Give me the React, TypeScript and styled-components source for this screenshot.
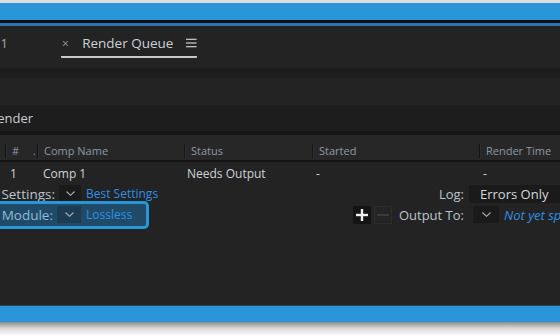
import React from "react";
import styled, {createGlobalStyle} from "styled-components";

const GlobalStyle = createGlobalStyle`
    * {
        box-sizing: border-box;
    }

    body {
        margin: 0;
        background: #232323;
        font-family: "Open Sans", "Noto Sans", sans-serif;
    }
`;

const Screen = styled.div`
    width: 560px;
    height: 336px;
    display: flex;
    flex-direction: column;
    overflow: hidden;
    background: #232323;
`;

const Strip = styled.div<{ h: number; bg: string }>`
    flex-shrink: 0;
    height: ${({h}) => h}px;
    background: ${({bg}) => bg};
`;

const FadeOut = styled.div`
    flex-shrink: 0;
    height: 14px;
    background: linear-gradient(#8c8c8c, #d8d8d8 45%, #fff);
`;

const Panel = styled.div`
    flex: 1;
    display: flex;
    flex-direction: column;
    background: #232323;
    border-bottom: 1px solid #2f4658;
`;

const TabRow = styled.div`
    height: 42px;
    flex-shrink: 0;
    display: flex;
    align-items: flex-start;
`;

// keeps the tail end of text that runs off the left edge
const ClipLeft = styled.div<{ w: number }>`
    width: ${({w}) => w}px;
    flex-shrink: 0;
    display: flex;
    justify-content: flex-end;
    overflow: hidden;
    white-space: nowrap;
`;

const TabCell = styled(ClipLeft)`
    height: 34px;
    align-items: center;
    color: #a8a8a8;
    font-size: 13px;
`;

const Tab = styled.div`
    margin-left: 53px;
    height: 32px;
    padding-top: 4px;
    width: 136px;
    display: flex;
    align-items: center;
    border-bottom: 2px solid #c9c9c9;
    border-radius: 0 0 1px 1px;
`;

const CloseMark = styled.span`
    color: #9a9a9a;
    font-size: 12px;
    width: 22px;
    padding-left: 1px;
`;

const TabTitle = styled.span`
    color: #c9d0d8;
    font-size: 13.5px;
    white-space: nowrap;
`;

const MenuIcon = styled.svg`
    margin-left: 13px;
`;

const Toolbar = styled.div`
    height: 10px;
    flex-shrink: 0;
    background: #1d1d1d;
`;

const Spacer = styled.div`
    height: 27px;
    flex-shrink: 0;
`;

const SectionLabel = styled.div`
    height: 26px;
    flex-shrink: 0;
    background: #1d1d1d;
    display: flex;
    align-items: center;
    color: #c8ccd0;
    font-size: 13px;
`;

const Columns = "5px 32px 147px 128px 167px 1fr";

const HeaderRow = styled.div`
    height: 31px;
    flex-shrink: 0;
    display: grid;
    grid-template-columns: ${Columns};
    align-items: center;
    padding-top: 6px;
    background: #272727;
    border-top: 4px solid #161616;
    border-bottom: 2px solid #141414;
`;

const HeaderCell = styled.div`
    display: flex;
    align-items: center;
    gap: 5px;
    color: #8f99a3;
    font-size: 11px;
    white-space: nowrap;
`;

const Sep = styled.span`
    width: 2px;
    height: 14px;
    background: #131313;
    border-right: 1px solid #2e2e2e;
    flex-shrink: 0;
`;

const Dot = styled.span`
    margin-left: 9px;
    font-size: 10px;
`;

const ItemRow = styled.div`
    height: 22px;
    flex-shrink: 0;
    display: grid;
    grid-template-columns: ${Columns};
    align-items: center;
    color: #cdd3d9;
    font-size: 12px;
    white-space: nowrap;
`;

const ItemCell = styled.div<{ pad: number }>`
    padding-left: ${({pad}) => pad}px;
`;

const SettingsRow = styled.div<{ h: number }>`
    height: ${({h}) => h}px;
    flex-shrink: 0;
    display: flex;
    align-items: center;
    gap: 5px;
    font-size: 13px;
    white-space: nowrap;
`;

const LeftGroup = styled.div`
    flex: 1;
    display: flex;
    align-items: center;
    font-size: 12px;
`;

const Highlight = styled.div`
    margin-left: -6px;
    width: 155px;
    height: 28px;
    display: flex;
    align-items: center;
    background: #1f4b68;
    border: 3px solid #2a96da;
    border-left: none;
    border-radius: 0 5px 5px 0;
`;

const Label = styled(ClipLeft)<{ tone?: string }>`
    font-size: 13.5px;
    color: ${({tone}) => tone ?? "#bcc3ca"};
`;

const Chevron = styled.div<{ w: number; dark?: boolean }>`
    width: ${({w}) => w}px;
    height: 17px;
    margin-left: 4px;
    flex-shrink: 0;
    display: flex;
    align-items: center;
    justify-content: center;
    background: ${({dark}) => (dark ? "#1b3c53" : "#1a1a1a")};
`;

const LinkValue = styled.span<{ italic?: boolean }>`
    margin-left: 5px;
    color: #2f8fe6;
    font-style: ${({italic}) => (italic ? "italic" : "normal")};
`;

const RightLabels = styled.div`
    display: flex;
    align-items: center;
    color: #bcc3ca;
`;

const ValueGroup = styled.div`
    width: 91px;
    flex-shrink: 0;
    display: flex;
    align-items: center;
`;

const LogBox = styled.div`
    width: 120px;
    height: 18px;
    flex-shrink: 0;
    display: flex;
    align-items: center;
    padding-left: 11px;
    background: #1a1a1a;
    color: #d6d9dc;
`;

const SquareButton = styled.div<{ dim?: boolean }>`
    width: 18px;
    height: 18px;
    margin-right: 3px;
    display: flex;
    align-items: center;
    justify-content: center;
    background: ${({dim}) => (dim ? "#242424" : "#141414")};
    border: 1px solid ${({dim}) => (dim ? "#2d2d2d" : "#141414")};
`;

const OutputLabel = styled.span`
    margin-left: 4px;
`;

const Rest = styled.div`
    flex: 1;
`;

const ChevronIcon: React.FC = () => (
    <svg width="9" height="5" viewBox="0 0 9 5">
        <polyline points="0.5,0.5 4.5,4.3 8.5,0.5" fill="none" stroke="#a9b0b6" strokeWidth="1.1"/>
    </svg>
);

const App: React.FC = () => {
    return (
        <Screen>
            <GlobalStyle/>
            <Strip h={3} bg="#dedede"/>
            <Strip h={17} bg="#2a95d8"/>
            <Strip h={3} bg="#0f0f0f"/>
            <Strip h={3} bg="#2b74b8"/>
            <Panel>
                <TabRow>
                    <TabCell w={8}>Comp 1</TabCell>
                    <Tab>
                        <CloseMark>×</CloseMark>
                        <TabTitle>Render Queue</TabTitle>
                        <MenuIcon width="11" height="10" viewBox="0 0 11 10">
                            <rect x="0" y="0.5" width="11" height="1.4" fill="#bdbdbd"/>
                            <rect x="0" y="4.3" width="11" height="1.4" fill="#bdbdbd"/>
                            <rect x="0" y="8.1" width="11" height="1.4" fill="#bdbdbd"/>
                        </MenuIcon>
                    </Tab>
                </TabRow>
                <Toolbar/>
                <Spacer/>
                <SectionLabel>
                    <ClipLeft w={33}>Current Render</ClipLeft>
                </SectionLabel>
                <HeaderRow>
                    <HeaderCell/>
                    <HeaderCell><Sep/> #<Dot>.</Dot></HeaderCell>
                    <HeaderCell><Sep/>Comp Name</HeaderCell>
                    <HeaderCell><Sep/>Status</HeaderCell>
                    <HeaderCell><Sep/>Started</HeaderCell>
                    <HeaderCell><Sep/>Render Time</HeaderCell>
                </HeaderRow>
                <ItemRow>
                    <ItemCell pad={0}/>
                    <ItemCell pad={5}>1</ItemCell>
                    <ItemCell pad={6}>Comp 1</ItemCell>
                    <ItemCell pad={3}>Needs Output</ItemCell>
                    <ItemCell pad={4}>-</ItemCell>
                    <ItemCell pad={4}>-</ItemCell>
                </ItemRow>
                <SettingsRow h={19}>
                    <LeftGroup>
                        <Label w={55}>Settings:</Label>
                        <Chevron w={22}><ChevronIcon/></Chevron>
                        <LinkValue>Best Settings</LinkValue>
                    </LeftGroup>
                    <RightLabels>Log:</RightLabels>
                    <ValueGroup>
                        <LogBox>Errors Only</LogBox>
                    </ValueGroup>
                </SettingsRow>
                <SettingsRow h={23}>
                    <LeftGroup>
                        <Highlight>
                            <Label w={59} tone="#93b9d6">&nbsp;Module:</Label>
                            <Chevron w={24} dark><ChevronIcon/></Chevron>
                            <LinkValue>Lossless</LinkValue>
                        </Highlight>
                    </LeftGroup>
                    <RightLabels>
                        <SquareButton>
                            <svg width="12" height="12" viewBox="0 0 12 12">
                                <rect x="0" y="4.8" width="12" height="2.4" fill="#f0f0f0"/>
                                <rect x="4.8" y="0" width="2.4" height="12" fill="#f0f0f0"/>
                            </svg>
                        </SquareButton>
                        <SquareButton dim>
                            <svg width="12" height="12" viewBox="0 0 12 12">
                                <rect x="0" y="5" width="12" height="2" fill="#3a3a3a"/>
                            </svg>
                        </SquareButton>
                        <OutputLabel>Output To:</OutputLabel>
                    </RightLabels>
                    <ValueGroup>
                        <Chevron w={26}><ChevronIcon/></Chevron>
                        <LinkValue italic>Not yet specified</LinkValue>
                    </ValueGroup>
                </SettingsRow>
                <Rest/>
            </Panel>
            <Strip h={16} bg="#2a95d8"/>
            <FadeOut/>
        </Screen>
    );
};

export default App;
